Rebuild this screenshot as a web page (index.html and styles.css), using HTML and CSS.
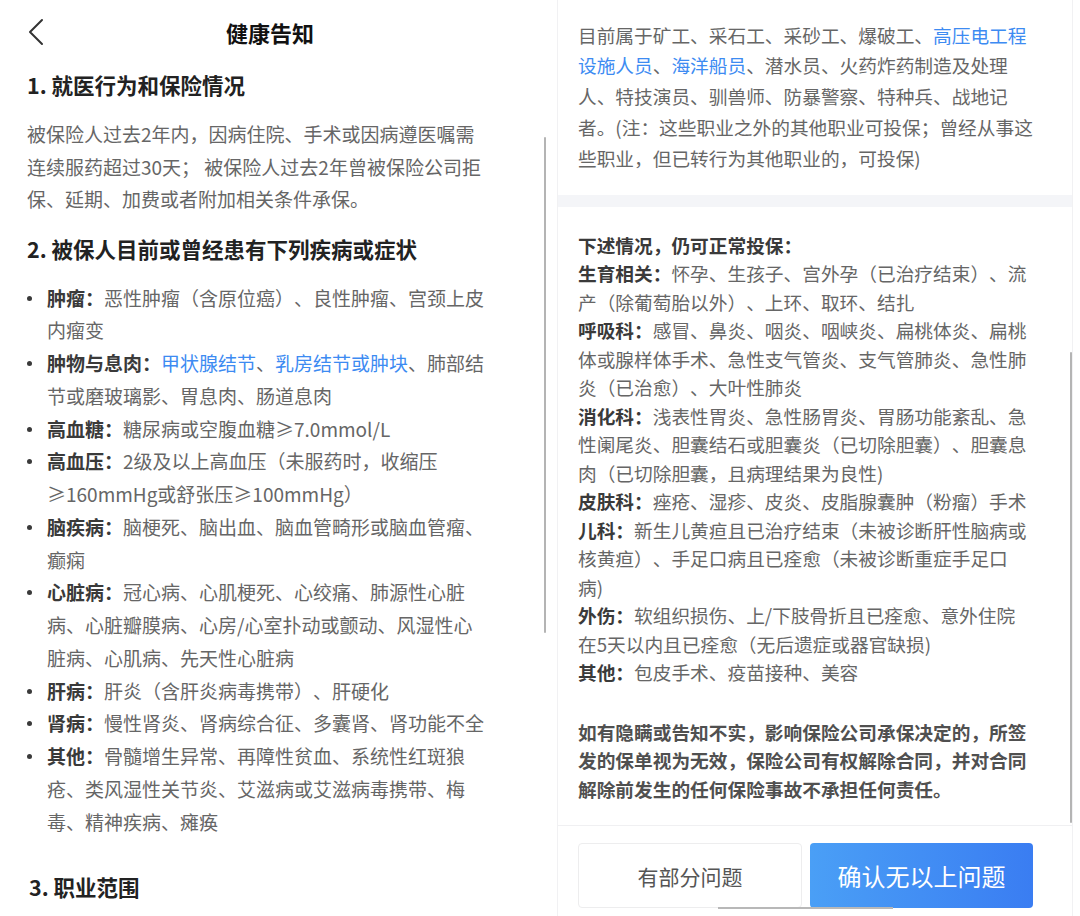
FILE: index.html
```html
<!DOCTYPE html>
<html lang="zh-CN">
<head>
<meta charset="utf-8">
<title>健康告知</title>
<link rel="stylesheet" href="styles.css">
</head>
<body>
<div class="page">
  <section class="panel left">
    <header class="nav">
      <svg class="back" width="18" height="28" viewBox="0 0 18 28" aria-hidden="true">
        <path d="M15 2 L3 14 L15 26" fill="none" stroke="#333" stroke-width="2" stroke-linecap="round" stroke-linejoin="round"/>
      </svg>
      <h1 class="title">健康告知</h1>
      <span></span>
    </header>

    <h2 class="sec sec1">1. 就医行为和保险情况</h2>
    <p class="para">被保险人过去2年内，因病住院、手术或因病遵医嘱需连续服药超过30天； 被保险人过去2年曾被保险公司拒保、延期、加费或者附加相关条件承保。</p>

    <h2 class="sec sec2">2. 被保人目前或曾经患有下列疾病或症状</h2>
    <ul class="list">
      <li><span class="txt"><b>肿瘤：</b>恶性肿瘤（含原位癌）、良性肿瘤、宫颈上皮内瘤变</span></li>
      <li><span class="txt"><b>肿物与息肉：</b><span class="link">甲状腺结节</span>、<span class="link">乳房结节或肿块</span>、肺部结节或磨玻璃影、胃息肉、肠道息肉</span></li>
      <li><span class="txt"><b>高血糖：</b>糖尿病或空腹血糖≥7.0mmol/L</span></li>
      <li><span class="txt"><b>高血压：</b>2级及以上高血压（未服药时，收缩压≥160mmHg或舒张压≥100mmHg）</span></li>
      <li><span class="txt"><b>脑疾病：</b>脑梗死、脑出血、脑血管畸形或脑血管瘤、癫痫</span></li>
      <li><span class="txt"><b>心脏病：</b>冠心病、心肌梗死、心绞痛、肺源性心脏病、心脏瓣膜病、心房/心室扑动或颤动、风湿性心脏病、心肌病、先天性心脏病</span></li>
      <li><span class="txt"><b>肝病：</b>肝炎（含肝炎病毒携带）、肝硬化</span></li>
      <li><span class="txt"><b>肾病：</b>慢性肾炎、肾病综合征、多囊肾、肾功能不全</span></li>
      <li><span class="txt"><b>其他：</b>骨髓增生异常、再障性贫血、系统性红斑狼疮、类风湿性关节炎、艾滋病或艾滋病毒携带、梅毒、精神疾病、瘫痪</span></li>
    </ul>

    <h2 class="sec sec3">3. 职业范围</h2>
    <div class="scroll-ind scroll-left"></div>
  </section>

  <section class="panel right">
    <div class="sheet">
      <div class="block block-top">
        <p class="jobs">目前属于矿工、采石工、采砂工、爆破工、<span class="link">高压电工程设施人员</span>、<span class="link">海洋船员</span>、潜水员、火药炸药制造及处理人、特技演员、驯兽师、防暴警察、特种兵、战地记者。(注：这些职业之外的其他职业可投保；曾经从事这些职业，但已转行为其他职业的，可投保)</p>
      </div>
      <div class="band"></div>
      <div class="block block-ok">
        <p class="lead">下述情况，仍可正常投保：</p>
        <p><b>生育相关：</b>怀孕、生孩子、宫外孕（已治疗结束）、流产（除葡萄胎以外）、上环、取环、结扎</p>
        <p><b>呼吸科：</b>感冒、鼻炎、咽炎、咽峡炎、扁桃体炎、扁桃体或腺样体手术、急性支气管炎、支气管肺炎、急性肺炎（已治愈）、大叶性肺炎</p>
        <p><b>消化科：</b>浅表性胃炎、急性肠胃炎、胃肠功能紊乱、急性阑尾炎、胆囊结石或胆囊炎（已切除胆囊）、胆囊息肉（已切除胆囊，且病理结果为良性)</p>
        <p><b>皮肤科：</b>痤疮、湿疹、皮炎、皮脂腺囊肿（粉瘤）手术</p>
        <p><b>儿科：</b>新生儿黄疸且已治疗结束（未被诊断肝性脑病或核黄疸）、手足口病且已痊愈（未被诊断重症手足口<br>病)</p>
        <p><b>外伤：</b>软组织损伤、上/下肢骨折且已痊愈、意外住院<br>在5天以内且已痊愈（无后遗症或器官缺损)</p>
        <p><b>其他：</b>包皮手术、疫苗接种、美容</p>
        <p class="warn">如有隐瞒或告知不实，影响保险公司承保决定的，所签发的保单视为无效，保险公司有权解除合同，并对合同解除前发生的任何保险事故不承担任何责任。</p>
      </div>
      <footer class="actions">
        <button class="btn btn-ghost" type="button">有部分问题</button>
        <button class="btn btn-primary" type="button">确认无以上问题</button>
      </footer>
    </div>
    <div class="scroll-ind scroll-right"></div>
    <div class="home-ind"></div>
  </section>
</div>
</body>
</html>
```

FILE: styles.css
```css
* {
  box-sizing: border-box;
}

html, body {
  margin: 0;
  padding: 0;
  background: #ffffff;
}

body {
  font-family: "Noto Sans CJK SC", "Noto Sans", "Liberation Sans", sans-serif;
  color: #666666;
  text-spacing-trim: space-all;
}

.page {
  display: flex;
  width: 1080px;
  height: 916px;
  overflow: hidden;
}

.panel {
  position: relative;
  height: 916px;
  overflow: hidden;
}

/* ---------- left panel ---------- */
.left {
  width: 557px;
  flex: none;
}

.nav {
  display: grid;
  grid-template-columns: 1fr auto 1fr;
  align-items: center;
  width: 513px;
  height: 64px;
  padding-left: 27px;
}

.back {
  display: block;
}

.title {
  margin: 0;
  font-size: 22px;
  line-height: 30px;
  font-weight: 700;
  color: #111111;
}

.sec {
  margin: 0;
  padding-left: 27px;
  font-size: 21.5px;
  line-height: 30px;
  font-weight: 700;
  color: #222222;
}

.sec1 {
  margin-top: 6px;
}

.para {
  margin: 18px 0 0;
  padding-left: 27px;
  width: 489px;
  font-size: 19px;
  line-height: 32.5px;
}

.sec2 {
  margin-top: 18.5px;
}

.list {
  list-style: none;
  margin: 17.6px 0 0;
  padding: 0 0 0 27px;
  width: 489px;
  font-size: 19px;
  line-height: 32.75px;
}

.list li {
  display: flex;
}

.list li::before {
  content: "";
  flex: none;
  width: 5px;
  height: 5px;
  margin: 14px 15px 0 0;
  border-radius: 50%;
  background: #3a3a3a;
}

.txt {
  flex: 1;
  min-width: 0;
}

b {
  font-weight: 700;
  color: #3a3a3a;
}

.link {
  color: #3d8bf2;
}

.sec3 {
  margin-top: 33.6px;
  padding-left: 29px;
}

.scroll-ind {
  position: absolute;
  width: 2px;
  background: #b4b4b4;
  border-radius: 1px;
}

.scroll-left {
  left: 544px;
  top: 137px;
  height: 496px;
}

/* ---------- right panel ---------- */
.right {
  width: 523px;
  flex: none;
}

.sheet {
  display: flex;
  flex-direction: column;
  width: 516px;
  height: 916px;
  border-left: 1px solid #f1f1f3;
  border-right: 1px solid #f1f1f3;
  font-size: 18.7px;
}

.block {
  padding-left: 20px;
  padding-right: 36px;
}

.block p {
  margin: 0;
}

.block-top {
  padding-top: 19.6px;
  padding-bottom: 21.65px;
  line-height: 30.75px;
}

.band {
  flex: none;
  height: 12px;
  background: #f4f5f8;
}

.block-ok {
  flex: 1;
  padding-top: 23.75px;
  line-height: 28.5px;
}

.lead {
  font-weight: 700;
  color: #3a3a3a;
}

.block-ok .warn {
  margin-top: 31px;
  font-weight: 700;
  color: #505050;
}

.actions {
  flex: none;
  display: flex;
  gap: 8px;
  border-top: 1px solid #f0f0f2;
  padding: 17px 0 8px 20px;
}

.btn {
  height: 65px;
  border-radius: 4px;
  font-family: inherit;
  cursor: pointer;
  padding: 0;
}

.btn-ghost {
  width: 224px;
  background: #ffffff;
  border: 1px solid #ededee;
  color: #555555;
  font-size: 21px;
}

.btn-primary {
  width: 223px;
  border: none;
  background: linear-gradient(to right, #4a9ff6, #3a7df2);
  color: #ffffff;
  font-size: 24px;
}

.scroll-right {
  left: 513px;
  top: 352px;
  height: 471px;
}

.home-ind {
  position: absolute;
  left: 161px;
  top: 907px;
  width: 175px;
  height: 2px;
  background: #b8b8b8;
}
```
